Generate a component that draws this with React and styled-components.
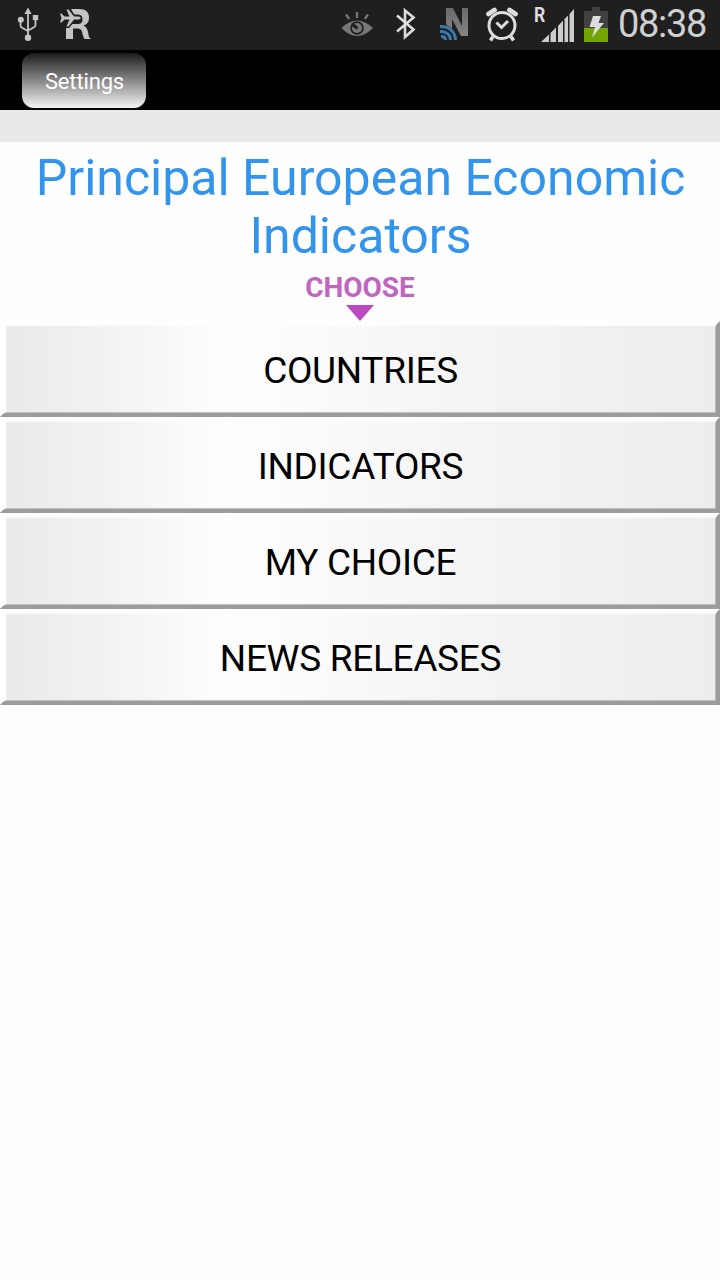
import React from 'react';
import styled, { createGlobalStyle } from 'styled-components';

const menuItems = ['COUNTRIES', 'INDICATORS', 'MY CHOICE', 'NEWS RELEASES'];

const UsbIcon = () => (
  <svg width="22" height="36" viewBox="0 0 22 36" fill="none" stroke="#c4c4c4" strokeWidth="1.8">
    <path d="M11 6V31M3.5 14V18.500Q3.5 20 5 20.8L11 24M18.500 11V18Q18.500 19.500 17 20.3L11 23.5" />
    <path d="M11 0.500L14.6 7H7.4Z" fill="#c4c4c4" stroke="none" />
    <circle cx="11" cy="30.800" r="3.2" fill="#c4c4c4" stroke="none" />
    <circle cx="3.800" cy="12.800" r="3" fill="#c4c4c4" stroke="none" />
    <rect x="15.800" y="8" width="5.4" height="5.2" fill="#c4c4c4" stroke="none" />
  </svg>
);

const RoamingIcon = () => (
  <svg width="32" height="32" viewBox="0 0 32 32">
    <path
      d="M11 1H19C26 1 29 4 29 9.500C29 14 27 16.500 23.500 17.500C26.500 19 27.500 21 28 24L29 29L31 31H24.500C23 29 22.500 26 22 23.500C21.500 21.500 20 20.500 17 20.500H13V31H6V20L12 16H18C21 16 22.500 14.500 22.500 11.500C22.500 8 21 6.500 17 6.500H14Z"
      fill="#c4c4c4"
    />
    <path
      d="M0 5.500H1.500L4.500 8.500H9.500L6.500 1.500H8.500L14 8.500H19Q22.500 10 19 11.500H14L8.500 18.500H6.500L9.500 11.500H4.500L1.500 14.500H0L1.500 10Z"
      fill="#c4c4c4"
      stroke="#1f1f1f"
      strokeWidth="3"
      paintOrder="stroke"
    />
  </svg>
);

const EyeIcon = () => (
  <svg width="34" height="26" viewBox="0 0 34 26">
    <path d="M0.500 16Q16 1 32 16Q16 32 0.500 16Z" fill="#777" />
    <circle cx="16" cy="16" r="6.800" fill="#1f1f1f" />
    <circle cx="16" cy="16" r="5" fill="#777" />
    <path d="M16.500 16.500L11.500 12.500" stroke="#1f1f1f" strokeWidth="3" />
    <path d="M16 0V6M5 2.500L8.300 7M27 2.500L23.700 7" stroke="#777" strokeWidth="2.200" />
  </svg>
);

const BluetoothIcon = () => (
  <svg width="20" height="32" viewBox="0 0 20 32" fill="none" stroke="#ddd" strokeWidth="2.600">
    <path d="M1 7.500L17.500 21.500L9 29V2.500L17.500 9.500L1 23.500" />
  </svg>
);

const NfcIcon = () => (
  <svg width="30" height="34" viewBox="0 0 30 34">
    <defs>
      <linearGradient id="nfc" x1="0" y1="0" x2="0" y2="1">
        <stop offset="0" stopColor="#6a6a6a" />
        <stop offset="1" stopColor="#858585" />
      </linearGradient>
    </defs>
    <path d="M6 1H13L22 19V1H28V29H21L12 12V24L6 17Z" fill="url(#nfc)" />
    <path d="M0 17.500C10 17.500 17 24 17 33H0Z" fill="#1f1f1f" />
    <g fill="none" stroke="#3c79ad" strokeWidth="3">
      <path d="M0 19.500C9 19 15.500 25 15.500 33" />
      <path d="M0 24.500C6 24 10.500 28 10.500 33" />
      <path d="M1 29.500C4 29.500 5.500 31 5.500 33" />
    </g>
  </svg>
);

const AlarmIcon = () => (
  <svg width="32" height="35" viewBox="0 0 32 35" fill="none" stroke="#ddd">
    <circle cx="16" cy="18.500" r="13" strokeWidth="3" />
    <path d="M10.500 15.500L15.500 20.500L22 14" strokeWidth="3" />
    <path d="M7 29.500L4.500 33.500M25 29.500L27.500 33.500" strokeWidth="3.500" />
    <path d="M2.500 7L8.500 3M23.500 3L29.500 7" strokeWidth="4.800" strokeLinecap="round" />
  </svg>
);

const SignalIcon = () => (
  <svg width="34" height="34" viewBox="0 0 34 34" fill="#ccc">
    <path d="M0 34L8 26.500V34ZM9.500 25L15 19.500V34H9.500ZM17 18L22 12.500V34H17ZM23.500 11L27 7.500V34H23.500ZM28.500 6L33 1V34H28.500Z" />
  </svg>
);

const BatteryIcon = () => (
  <svg width="24" height="35" viewBox="0 0 24 35">
    <path d="M0 4H8V0H16V4H24V21H0Z" fill="#414141" />
    <rect y="21" width="24" height="14" fill="#73a500" />
    <path d="M9 9H17L14.500 16H20L8 30.500L11 20H5.500Z" fill="#ddd" />
  </svg>
);

const App = () => {
  return (
    <Page>
      <GlobalStyle />
      <StatusBar>
        <IconSlot $left={17} $top={7}><UsbIcon /></IconSlot>
        <IconSlot $left={21} $top={8}><RoamingIcon /></IconSlot>
        <Spacer />
        <IconSlot $top={12}><EyeIcon /></IconSlot>
        <IconSlot $left={21} $top={8}><BluetoothIcon /></IconSlot>
        <IconSlot $left={24} $top={7}><NfcIcon /></IconSlot>
        <IconSlot $left={16} $top={7}><AlarmIcon /></IconSlot>
        <Signal>
          <Roaming>R</Roaming>
          <SignalIcon />
        </Signal>
        <IconSlot $left={9} $top={7}><BatteryIcon /></IconSlot>
        <Clock>08:38</Clock>
      </StatusBar>
      <Toolbar>
        <SettingsButton>Settings</SettingsButton>
      </Toolbar>
      <Strip />
      <main>
        <Title>Principal European Economic Indicators</Title>
        <Choose>CHOOSE</Choose>
        <Arrow />
        <Menu>
          {menuItems.map((item) => (
            <MenuButton key={item}>{item}</MenuButton>
          ))}
        </Menu>
      </main>
    </Page>
  );
};

const GlobalStyle = createGlobalStyle`
  * {
    box-sizing: border-box;
  }
  body {
    margin: 0;
    background: #fefefe;
    font-family: Roboto, sans-serif;
  }
  svg {
    display: block;
  }
`;

const Page = styled.div`
  width: 720px;
  min-height: 1280px;
  background: #fefefe;
`;

const StatusBar = styled.header`
  display: flex;
  align-items: flex-start;
  height: 50px;
  background: #1f1f1f;
`;

const IconSlot = styled.div`
  flex: none;
  margin-left: ${({ $left }) => $left || 0}px;
  padding-top: ${({ $top }) => $top}px;
`;

const Spacer = styled.div`
  flex: 1;
`;

const Signal = styled.div`
  position: relative;
  flex: none;
  margin-left: 23px;
  padding-top: 8px;
`;

const Roaming = styled.span`
  position: absolute;
  left: -7px;
  top: 4px;
  color: #ddd;
  font-size: 20px;
  font-weight: 700;
  line-height: 22px;
  transform: scaleX(0.88);
  transform-origin: left;
`;

const Clock = styled.div`
  flex: none;
  width: 102px;
  margin-left: 10px;
  color: #d0d0d0;
  font-size: 38px;
  line-height: 48px;
  letter-spacing: -1.3px;
  white-space: nowrap;
`;

const Toolbar = styled.nav`
  height: 60px;
  padding: 3px 22px 0;
  background: #000;
`;

const SettingsButton = styled.button`
  width: 124px;
  height: 55px;
  padding: 2px 0 0 1px;
  border: none;
  border-radius: 12px;
  background: linear-gradient(#1c1c1c, #f4f4f4);
  color: #fff;
  font-family: inherit;
  font-size: 22px;
  letter-spacing: -0.15px;
`;

const Strip = styled.div`
  height: 32px;
  background: #e9e9e9;
`;

const Title = styled.h1`
  margin: 0;
  padding: 7px 20px 0 21px;
  color: #3394ec;
  font-size: 50px;
  font-weight: 400;
  line-height: 58px;
  text-align: center;
`;

const Choose = styled.p`
  height: 40px;
  margin: 0;
  padding-top: 6px;
  color: #c265c2;
  font-size: 28px;
  font-weight: 700;
  line-height: 33px;
  text-align: center;
`;

const Arrow = styled.div`
  width: 28px;
  height: 16px;
  margin: 0 auto;
  background: #bd48c2;
  clip-path: polygon(0 0, 100% 0, 50% 100%);
`;

const Menu = styled.div`
  display: grid;
  grid-auto-rows: 96px;
`;

const MenuButton = styled.button`
  padding: 2px 0 0 1px;
  border: 4px solid;
  border-color: #fefefe #9c9c9c #9c9c9c #fefefe;
  background: linear-gradient(90deg, #eaeaea 0%, #f2f2f2 14%, #fefefe 31%, #fcfcfc 40%, #f3f3f3 70%, #ededed 100%) padding-box;
  box-shadow: inset 2px 1px 1px #fcfcfc, inset -1px -1px 1px #bcbcbc;
  color: #000;
  font-family: inherit;
  font-size: 37px;
  letter-spacing: -0.3px;
  text-shadow: 0 1px 1px #fff;
`;

export default App;
